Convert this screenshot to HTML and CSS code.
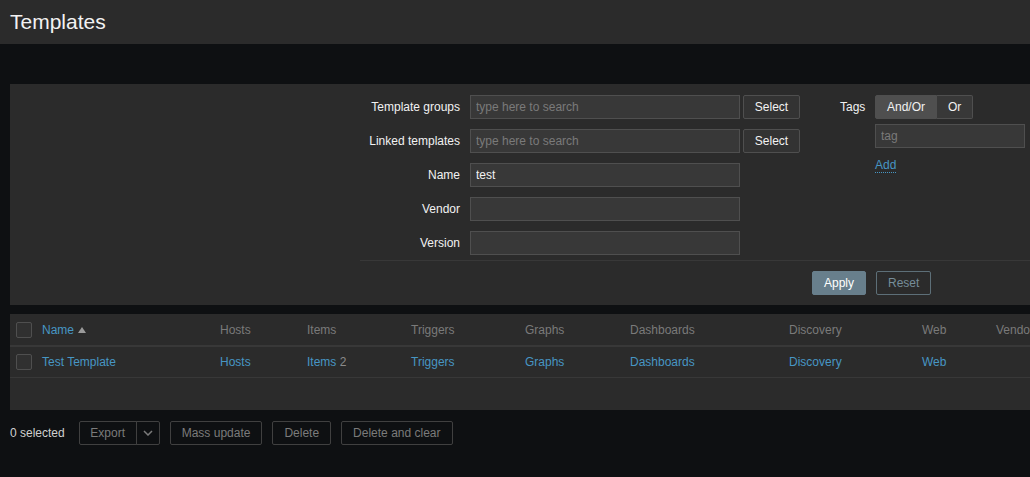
FILE: index.html
```html
<!DOCTYPE html>
<html>
<head>
<meta charset="utf-8">
<title>Templates</title>
<link rel="stylesheet" href="styles.css">
</head>
<body>
<header class="page-header">
  <h1 class="page-title">Templates</h1>
</header>
<main class="content">
  <section class="filter">
    <div class="filter-body">
      <div class="filter-grid">
        <label class="f-label">Template groups</label>
        <input class="f-input" type="text" placeholder="type here to search">
        <button class="btn-select">Select</button>

        <label class="f-label">Linked templates</label>
        <input class="f-input" type="text" placeholder="type here to search">
        <button class="btn-select">Select</button>

        <label class="f-label">Name</label>
        <input class="f-input" type="text" value="test">
        <span></span>

        <label class="f-label">Vendor</label>
        <input class="f-input" type="text">
        <span></span>

        <label class="f-label">Version</label>
        <input class="f-input" type="text">
        <span></span>
      </div>
      <div class="tags-col">
        <label class="tags-label">Tags</label>
        <div class="tags-body">
          <div class="seg">
            <button class="seg-btn active">And/Or</button>
            <button class="seg-btn">Or</button>
          </div>
          <input class="tag-input" type="text" placeholder="tag">
          <a class="add-link" href="#">Add</a>
        </div>
      </div>
    </div>
    <div class="filter-footer">
      <button class="btn-apply">Apply</button>
      <button class="btn-reset">Reset</button>
    </div>
  </section>

  <section class="list">
    <table class="list-table">
      <colgroup>
        <col class="c-cb"><col class="c-name"><col class="c-hosts"><col class="c-items"><col class="c-triggers"><col class="c-graphs"><col class="c-dash"><col class="c-disc"><col class="c-web"><col class="c-vendor"><col class="c-version">
      </colgroup>
      <thead>
        <tr>
          <th class="cb-cell"><span class="checkbox"></span></th>
          <th><a class="link" href="#">Name</a><span class="sort-arrow"></span></th>
          <th>Hosts</th>
          <th>Items</th>
          <th>Triggers</th>
          <th>Graphs</th>
          <th>Dashboards</th>
          <th>Discovery</th>
          <th>Web</th>
          <th>Vendor</th>
          <th>Version</th>
        </tr>
      </thead>
      <tbody>
        <tr>
          <td class="cb-cell"><span class="checkbox"></span></td>
          <td><a class="link" href="#">Test Template</a></td>
          <td><a class="link" href="#">Hosts</a></td>
          <td><a class="link" href="#">Items</a> <span class="count">2</span></td>
          <td><a class="link" href="#">Triggers</a></td>
          <td><a class="link" href="#">Graphs</a></td>
          <td><a class="link" href="#">Dashboards</a></td>
          <td><a class="link" href="#">Discovery</a></td>
          <td><a class="link" href="#">Web</a></td>
          <td></td>
          <td></td>
        </tr>
      </tbody>
    </table>
    <div class="list-foot"></div>
  </section>

  <div class="actions">
    <span class="selected">0 selected</span>
    <div class="split">
      <button class="btn-dis split-main">Export</button>
      <button class="btn-dis split-arrow"><svg width="10" height="6" viewBox="0 0 10 6"><path d="M1 1l4 4 4-4" fill="none" stroke="#7b7b7b" stroke-width="1.5"/></svg></button>
    </div>
    <button class="btn-dis">Mass update</button>
    <button class="btn-dis">Delete</button>
    <button class="btn-dis">Delete and clear</button>
  </div>
</main>
</body>
</html>
```

FILE: styles.css
```css
html, body {
  margin: 0;
  padding: 0;
  overflow: hidden;
}
body {
  background: #0e1012;
  color: #f2f2f2;
  font-family: "Liberation Sans", Arial, sans-serif;
  font-size: 12px;
  width: 1030px;
  height: 477px;
}
button, input {
  font-family: "Liberation Sans", Arial, sans-serif;
  font-size: 12px;
}
.page-header {
  height: 44px;
  background: #2b2b2b;
  padding-left: 10px;
  display: flex;
  align-items: center;
}
.page-title {
  margin: 0;
  font-size: 21px;
  font-weight: normal;
  color: #f2f2f2;
  line-height: 24px;
}
.content {
  padding: 40px 0 0 10px;
}
.filter {
  background: #2b2b2b;
  width: 1020px;
  overflow: hidden;
}
.filter-body {
  display: flex;
  padding: 11px 0 0 350px;
  width: 800px;
}
.filter-grid {
  display: grid;
  grid-template-columns: 110px 270px 60px;
  grid-auto-rows: 24px;
  row-gap: 10px;
  align-items: center;
  flex: none;
}
.f-label {
  text-align: right;
  padding-right: 10px;
  color: #f2f2f2;
}
.f-input, .tag-input {
  box-sizing: border-box;
  height: 24px;
  background: #383838;
  border: 1px solid #4f4f4f;
  color: #f2f2f2;
  padding: 0 5px;
  outline: none;
  width: 270px;
}
.f-input::placeholder, .tag-input::placeholder {
  color: #7a7a7a;
}
.btn-select {
  box-sizing: border-box;
  margin-left: 3px;
  width: 57px;
  height: 24px;
  background: #333333;
  border: 1px solid #4f4f4f;
  border-radius: 2px;
  color: #f2f2f2;
  padding: 0;
}
.tags-col {
  display: flex;
  margin-left: 40px;
  flex: none;
}
.tags-label {
  width: 35px;
  line-height: 24px;
}
.tags-body {
  display: flex;
  flex-direction: column;
  align-items: flex-start;
}
.seg {
  display: flex;
  height: 24px;
}
.seg-btn {
  box-sizing: border-box;
  height: 24px;
  background: #383838;
  border: 1px solid #4f4f4f;
  color: #f2f2f2;
  padding: 0 11px;
}
.seg-btn:first-child {
  border-radius: 2px 0 0 2px;
}
.seg-btn:last-child {
  border-radius: 0 2px 2px 0;
  border-left: none;
  padding: 0 11px;
}
.seg-btn.active {
  background: #4f4f4f;
}
.tag-input {
  margin-top: 5px;
  width: 150px;
}
.add-link {
  margin-top: 11px;
  color: #4796c4;
  text-decoration: none;
  border-bottom: 1px dotted #4796c4;
  line-height: 13px;
}
.filter-footer {
  margin: 5px 0 0 350px;
  border-top: 1px solid #383838;
  padding: 10px 0 10px 452px;
  display: flex;
  gap: 10px;
}
.btn-apply {
  box-sizing: border-box;
  height: 24px;
  background: #687f8c;
  border: 1px solid #687f8c;
  border-radius: 2px;
  color: #ffffff;
  padding: 0 11px;
}
.btn-reset {
  box-sizing: border-box;
  height: 24px;
  background: transparent;
  border: 1px solid #5d6f78;
  border-radius: 2px;
  color: #768d99;
  padding: 0 11px;
}
.list {
  margin-top: 9px;
  background: #2b2b2b;
  width: 1020px;
  overflow: hidden;
}
.list-table {
  table-layout: fixed;
  border-collapse: collapse;
  width: 1221px;
}
.c-cb { width: 27px; }
.c-name { width: 178px; }
.c-hosts { width: 87px; }
.c-items { width: 104px; }
.c-triggers { width: 114px; }
.c-graphs { width: 105px; }
.c-dash { width: 159px; }
.c-disc { width: 133px; }
.c-web { width: 74px; }
.c-vendor { width: 120px; }
.c-version { width: 120px; }
.list-table th, .list-table td {
  text-align: left;
  padding: 0 5px;
  white-space: nowrap;
  overflow: hidden;
}
.list-table th {
  height: 31px;
  font-weight: normal;
  color: #7a7a7a;
  border-bottom: 2px solid #383838;
}
.list-table td {
  height: 30px;
  border-bottom: 1px solid #383838;
}
.list-table .cb-cell {
  padding: 0 0 0 6px;
}
.checkbox {
  display: block;
  box-sizing: border-box;
  width: 16px;
  height: 16px;
  background: #303030;
  border: 1px solid #4f4f4f;
  border-radius: 2px;
}
.link {
  color: #4796c4;
  text-decoration: none;
}
.sort-arrow {
  display: inline-block;
  margin-left: 4px;
  width: 0;
  height: 0;
  border-left: 4px solid transparent;
  border-right: 4px solid transparent;
  border-bottom: 6px solid #9a9a9a;
  vertical-align: 1px;
}
.count {
  color: #8a8a8a;
}
.list-foot {
  height: 32px;
}
.actions {
  margin-top: 11px;
  display: flex;
  align-items: center;
  gap: 10px;
}
.selected {
  margin-right: 4px;
  color: #d0d0d0;
}
.btn-dis {
  box-sizing: border-box;
  height: 24px;
  background: transparent;
  border: 1px solid #404040;
  border-radius: 2px;
  color: #7b7b7b;
  padding: 0 11px;
}
.split {
  display: flex;
}
.split-main {
  width: 58px;
  padding: 0;
  border-radius: 2px 0 0 2px;
}
.split-arrow {
  width: 24px;
  padding: 0;
  border-left: 1px solid #404040;
  margin-left: -1px;
  border-radius: 0 2px 2px 0;
  display: flex;
  align-items: center;
  justify-content: center;
}
```
